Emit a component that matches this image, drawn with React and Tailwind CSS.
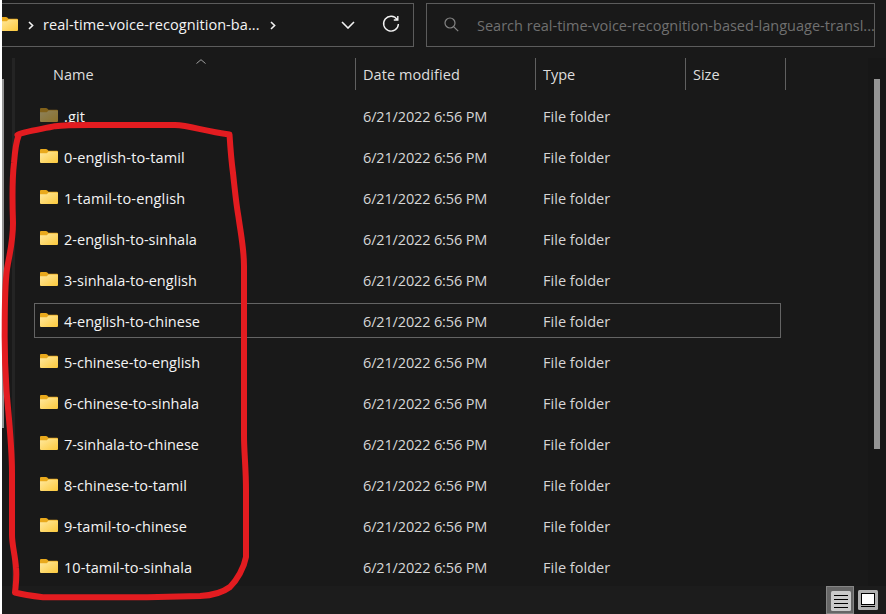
import React from 'react';

const rows = [
  ['.git', 'tracking-[0.1px]'],
  ['0-english-to-tamil', 'tracking-[0.15px]'],
  ['1-tamil-to-english', 'tracking-[0.18px]'],
  ['2-english-to-sinhala', 'tracking-[0.03px]'],
  ['3-sinhala-to-english', 'tracking-[0.03px]'],
  ['4-english-to-chinese', 'tracking-[0.01px]'],
  ['5-chinese-to-english', 'tracking-[0.02px]'],
  ['6-chinese-to-sinhala', 'tracking-[-0.04px]'],
  ['7-sinhala-to-chinese', 'tracking-[-0.05px]'],
  ['8-chinese-to-tamil', 'tracking-[0.07px]'],
  ['9-tamil-to-chinese', 'tracking-[0.07px]'],
  ['10-tamil-to-sinhala', 'tracking-[0.08px]'],
];

function Folder({ className = '' }) {
  return (
    <svg className={`block h-[14px] w-[18px] shrink-0 ${className}`} viewBox="0 0 18 14">
      <defs>
        <linearGradient id="folderFace" x1="0" y1="0" x2="1" y2="1">
          <stop offset="0" stopColor="#ffe9a0" />
          <stop offset="1" stopColor="#fcc93c" />
        </linearGradient>
      </defs>
      <path d="M0 1Q0 0 1 0H6Q6.7 0 7.3 .6L8.4 1.7H17Q18 1.7 18 2.7V6H0Z" fill="#e9a91c" />
      <path d="M0 4.2H6.2Q6.8 4.2 7.3 3.7L8.6 2.4H17Q18 2.4 18 3.3V13Q18 14 17 14H1Q0 14 0 13Z" fill="url(#folderFace)" />
    </svg>
  );
}

function Chevron() {
  return (
    <svg className="block h-[9px] w-[6px] shrink-0" viewBox="0 0 6 9" fill="none" stroke="#f2f2f2" strokeWidth="1.6">
      <path d="M1 1L4.6 4.5L1 8" />
    </svg>
  );
}

function AddressBar() {
  return (
    <div className="flex h-11 w-[412px] items-center border border-l-0 border-[#5c5c5c]">
      <div className="-mt-[2px] flex w-4 justify-end overflow-hidden"><Folder /></div>
      <div className="ml-[10px]"><Chevron /></div>
      <div className="ml-[9px] w-[217px] whitespace-nowrap text-[#f4f4f4] tracking-[0.06px]">real-time-voice-recognition-ba...</div>
      <div className="ml-[10px]"><Chevron /></div>
      <svg className="ml-[65px] -mt-px block h-2 w-[14px]" viewBox="0 0 14 8" fill="none" stroke="#f2f2f2" strokeWidth="1.6">
        <path d="M1 1L7 7L13 1" />
      </svg>
      <svg className="ml-[27px] -mt-[2px] block h-[18px] w-[18px]" viewBox="0 0 18 18" fill="none" stroke="#f2f2f2" strokeWidth="1.4">
        <path d="M15.2 4.6A7.4 7.4 0 1 0 16.4 9M15.8 1V5H11.8" />
      </svg>
    </div>
  );
}

function SearchBox() {
  return (
    <div className="ml-3 flex h-11 w-[449px] items-center border border-[#5c5c5c]">
      <svg className="ml-[17px] -mt-[2px] block h-[15px] w-[15px] shrink-0" viewBox="0 0 15 15" fill="none" stroke="#858585" strokeWidth="1.2">
        <circle cx="6" cy="6" r="5" />
        <path d="M9.6 9.6L14.2 14.2" />
      </svg>
      <div className="ml-[18px] whitespace-nowrap pt-[2px] text-[#707070] tracking-[0.005px]">Search real-time-voice-recognition-based-language-transl...</div>
    </div>
  );
}

function Header() {
  return (
    <div className="flex h-8 items-center text-[#dedede]">
      <div className="relative flex h-full w-[322px] items-center border-r border-[#606060] pl-[19px] pt-[2px]">
        Name
        <svg className="absolute left-[162px] top-[1px] block h-[5px] w-[10px]" viewBox="0 0 10 5" fill="none" stroke="#a0a0a0">
          <path d="M.5 4.5L5 .7L9.5 4.5" />
        </svg>
      </div>
      <div className="flex h-full w-[180px] items-center border-r border-[#606060] pl-[7px] pt-[2px] tracking-[0.08px]">Date modified</div>
      <div className="flex h-full w-[150px] items-center border-r border-[#606060] pl-[7px] pt-[2px]">Type</div>
      <div className="flex h-full w-[100px] items-center border-r border-[#606060] pl-[7px] pt-[2px]">Size</div>
    </div>
  );
}

function FileRow({ name, tracking, hidden, focused }) {
  return (
    <div className={`flex h-[35px] w-[747px] items-center border whitespace-nowrap ${focused ? 'border-[#646464]' : 'border-transparent'}`}>
      <div className="ml-[5px] -mt-px"><Folder className={hidden ? 'opacity-50' : ''} /></div>
      <div className={`ml-[6px] w-[299px] pt-[3px] text-[#f4f4f4] ${tracking}`}>{name}</div>
      <div className="w-[180px] pt-[3px] text-[#d6d6d6] tracking-[-0.15px]">6/21/2022 6:56 PM</div>
      <div className="pt-[3px] text-[#d6d6d6] tracking-[0.03px]">File folder</div>
    </div>
  );
}

function ViewSwitch() {
  return (
    <div className="flex h-7 shrink-0 items-start justify-end bg-[#1c1c1c] pr-2">
      <div className="flex h-7 w-7 items-center justify-center border border-[#858585] bg-[#666] pl-[2px] pt-[2px]">
        <svg className="block h-5 w-5" viewBox="0 0 20 20">
          <rect width="20" height="20" rx="1.5" fill="#cacaca" />
          <path d="M3 4.5H17M3 8.5H17M3 12.5H17M3 16.5H17" stroke="#000" />
        </svg>
      </div>
      <svg className="ml-1 mt-1 block h-5 w-5" viewBox="0 0 20 20">
        <rect width="20" height="20" rx="1.5" fill="#b0b0b0" />
        <rect x="3.5" y="3.5" width="13" height="11" fill="#fff" stroke="#000" />
        <path d="M3 16.5H17" stroke="#000" />
      </svg>
    </div>
  );
}

export default function App() {
  return (
    <div className="relative flex h-[614px] w-[886px] overflow-hidden bg-[#191919] font-['Open_Sans','Noto_Sans',sans-serif] text-[14.5px] leading-5">
      <div className="w-[2px] shrink-0 bg-white" />
      <div className="flex min-w-0 flex-1 flex-col">
        <div className="flex h-[58px] shrink-0 pt-[3px]">
          <AddressBar />
          <SearchBox />
        </div>
        <div className="flex min-h-0 flex-1">
          <div className="w-[2px] shrink-0 pt-[21px]"><div className="h-[349px] bg-[#959595]" /></div>
          <div className="ml-2 w-[3px] shrink-0 bg-[#242424]" />
          <div className="ml-[19px] w-[752px] shrink-0">
            <Header />
            <div className="mt-2 flex flex-col gap-[6px]">
              {rows.map(([name, tracking], i) => (
                <FileRow key={name} name={name} tracking={tracking} hidden={i === 0} focused={i === 5} />
              ))}
            </div>
          </div>
          <div className="ml-auto w-[18px] bg-[#171717] pl-[6px] pt-[21px]"><div className="h-[370px] w-[6px] bg-[#959595]" /></div>
        </div>
        <ViewSwitch />
      </div>
      <svg className="pointer-events-none absolute inset-0" width="886" height="614" viewBox="0 0 886 614" fill="none" stroke="#e31c20" strokeWidth="6" strokeLinecap="round" strokeLinejoin="round">
        <path d="M17.5 135C23 131.500 43 129 55 126.200C65 125 75 125 90 125H175C190 125.500 203 131 229.500 134.500C230.500 150 231 158 233 173C235 191 236 203 238.500 217C241 235 244 249 244 266V435C244 453 246 468 246 490V557C244 568 237 580 230 587C222 593 211 595.500 200 596L147 597.200H43C32 596 24 595 15 592.500C16 583 17 577 16 568C15 554 12 545 12 535V473C12 444 8 411 6.500 390C5 368 4.500 351 4.700 330C4.700 305 5 284 7 269C10 251 13 242 13 223C12 193 12 180 14 163C15 150 16 142 18.500 136" />
      </svg>
    </div>
  );
}
